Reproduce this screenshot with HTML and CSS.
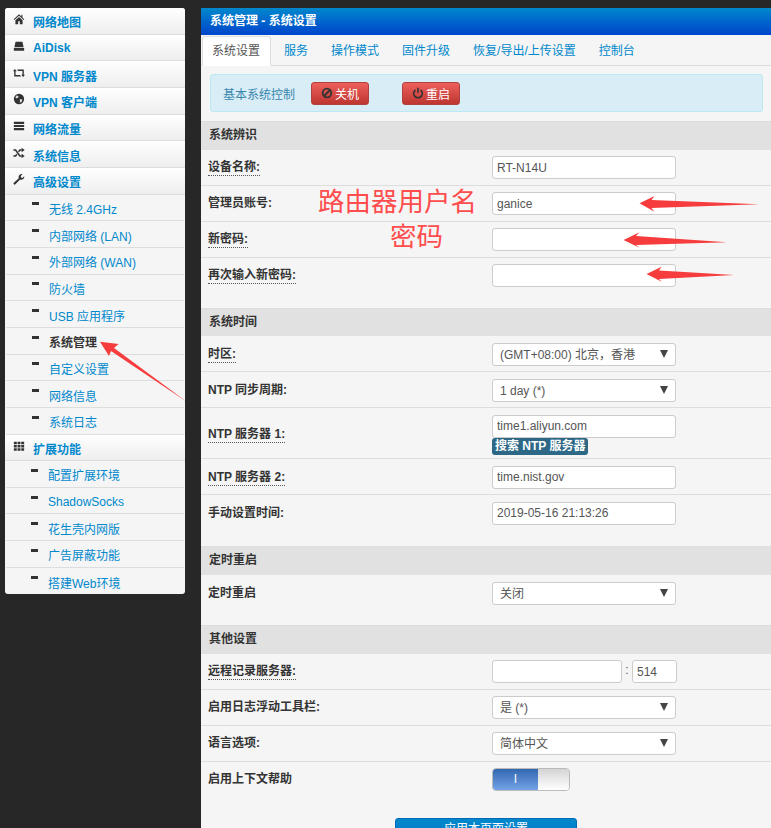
FILE: index.html
```html
<!DOCTYPE html>
<html lang="zh">
<head>
  <meta charset="UTF-8" />
  <title>系统管理 - 系统设置</title>
  <link rel="stylesheet" href="styles.css">
</head>
<body>
  <div class="page">
    <ul class="sideNav">
      <li class="navItem"><svg class="navIcon" viewBox="0 0 14 14"><path d="M7 1.500 0.800 7.400l.8.8L7 3.200l5.400 5 .8-.8-2.200-2.100V2H9.800v2.200zM2.800 8.600V13H6V9.600h2V13h3.200V8.600L7 4.700z"/></svg><a>网络地图</a></li>
      <li class="navItem"><svg class="navIcon" viewBox="0 0 14 14"><path d="M3 2h8l1.400 6.500H1.600zM1 9.400h12V12.600H1z"/></svg><a>AiDisk</a></li>
      <li class="navItem"><svg class="navIcon" viewBox="0 0 14 14"><path d="M0 5 2.200 2.400 4.400 5H3v4.400h5l1.500 1.700H1.400V5zM14 9l-2.200 2.600L9.600 9H11V4.600H6L4.500 2.900H12.600V9z"/></svg><a>VPN 服务器</a></li>
      <li class="navItem"><svg class="navIcon" viewBox="0 0 14 14"><circle cx="7" cy="7" r="6"/><path fill="#ddd" d="M4 2.800 6.500 3.500 6 5.500 4 6.500 2.800 5zM8 7l3 .5-1 3-2 1z"/></svg><a>VPN 客户端</a></li>
      <li class="navItem"><svg class="navIcon" viewBox="0 0 14 14"><path d="M1 2h12v2.600H1zM1 5.700h12v2.600H1zM1 9.400h12V12H1z"/></svg><a>网络流量</a></li>
      <li class="navItem"><svg class="navIcon" viewBox="0 0 14 14"><path fill="none" stroke="#333" stroke-width="1.800" d="M.5 3.500h2.500l5 7h2M.5 10.500h2.500l1.500-2M6.500 5.500l1.500-2h2"/><path d="M10 1l3.600 2.500L10 6zM10 8l3.600 2.500L10 13z"/></svg><a>系统信息</a></li>
      <li class="navItem"><svg class="navIcon" viewBox="0 0 14 14"><path d="M1 11.500 6.800 6A3.400 3.400 0 0 1 11 1.500L9 3.600l.4 1.700 1.700.4L13 3.700A3.400 3.400 0 0 1 8.300 7.600L2.800 13.200a1.200 1.200 0 0 1-1.800-1.700z"/></svg><a>高级设置</a></li>
      <li>
        <ul class="subNav">
          <li class="subItem"><a>无线 2.4GHz</a></li>
          <li class="subItem"><a>内部网络 (LAN)</a></li>
          <li class="subItem"><a>外部网络 (WAN)</a></li>
          <li class="subItem"><a>防火墙</a></li>
          <li class="subItem"><a>USB 应用程序</a></li>
          <li class="subItem current"><a>系统管理</a></li>
          <li class="subItem"><a>自定义设置</a></li>
          <li class="subItem"><a>网络信息</a></li>
          <li class="subItem"><a>系统日志</a></li>
        </ul>
      </li>
      <li class="navItem"><svg class="navIcon" viewBox="0 0 14 14"><path d="M1 2h3.400v3H1zM5.300 2h3.400v3H5.300zM9.600 2H13v3H9.600zM1 5.800h3.400v3H1zM5.300 5.800h3.400v3H5.300zM9.600 5.800H13v3H9.600zM1 9.600h3.400v3H1zM5.300 9.600h3.400v3H5.300zM9.600 9.600H13v3H9.600z"/></svg><a>扩展功能</a></li>
      <li>
        <ul class="subNav extNav">
          <li class="subItem"><a>配置扩展环境</a></li>
          <li class="subItem"><a>ShadowSocks</a></li>
          <li class="subItem"><a>花生壳内网版</a></li>
          <li class="subItem"><a>广告屏蔽功能</a></li>
          <li class="subItem"><a>搭建Web环境</a></li>
        </ul>
      </li>
    </ul>

    <div class="main">
      <div class="mainTitle">系统管理 - 系统设置</div>
      <div class="tabs">
        <a class="tab active">系统设置</a>
        <a class="tab">服务</a>
        <a class="tab">操作模式</a>
        <a class="tab">固件升级</a>
        <a class="tab">恢复/导出/上传设置</a>
        <a class="tab">控制台</a>
      </div>

      <div class="infoBox">
        <span class="infoText">基本系统控制</span>
        <button class="dangerBtn"><svg class="btnIcon" viewBox="0 0 12 12"><circle cx="6" cy="6" r="4.300" fill="none" stroke="#333" stroke-width="1.800"/><path d="M3 9 9 3" stroke="#333" stroke-width="1.800"/></svg>关机</button>
        <button class="dangerBtn"><svg class="btnIcon" viewBox="0 0 12 12"><path d="M3.500 3a4.300 4.300 0 1 0 5 0" fill="none" stroke="#333" stroke-width="1.600"/><path d="M6 .8v5" stroke="#333" stroke-width="1.600"/></svg>重启</button>
      </div>

      <div class="sectionHead">系统辨识</div>
      <div class="row"><label class="help">设备名称:</label><input class="field" type="text" value="RT-N14U"></div>
      <div class="row"><label>管理员账号:</label><input class="field" type="text" value="ganice"></div>
      <div class="row"><label class="help">新密码:</label><input class="field" type="text"></div>
      <div class="row last"><label class="help">再次输入新密码:</label><input class="field" type="text"></div>

      <div class="sectionHead">系统时间</div>
      <div class="row"><label class="help">时区:</label><div class="selectBox">(GMT+08:00) 北京，香港</div></div>
      <div class="row"><label>NTP 同步周期:</label><div class="selectBox">1 day (*)</div></div>
      <div class="row tall">
        <label class="help">NTP 服务器 1:</label>
        <div class="stack">
          <input class="field" type="text" value="time1.aliyun.com">
          <span class="tag">搜索 NTP 服务器</span>
        </div>
      </div>
      <div class="row"><label class="help">NTP 服务器 2:</label><input class="field" type="text" value="time.nist.gov"></div>
      <div class="row last longLast"><label>手动设置时间:</label><input class="field" type="text" value="2019-05-16 21:13:26"></div>

      <div class="sectionHead">定时重启</div>
      <div class="row last"><label>定时重启</label><div class="selectBox">关闭</div></div>

      <div class="sectionHead">其他设置</div>
      <div class="row">
        <label class="help">远程记录服务器:</label>
        <div class="hostGroup">
          <input class="field hostField" type="text">
          <span class="colon">:</span>
          <input class="field portField" type="text" value="514">
        </div>
      </div>
      <div class="row"><label>启用日志浮动工具栏:</label><div class="selectBox">是 (*)</div></div>
      <div class="row"><label>语言选项:</label><div class="selectBox">简体中文</div></div>
      <div class="row last">
        <label>启用上下文帮助</label>
        <div class="switch"><span class="switchOn">I</span><span class="switchOff"></span></div>
      </div>

      <div class="applyRow"><button class="applyBtn">应用本页面设置</button></div>
    </div>
  </div>

  <div class="note noteUser">路由器用户名</div>
  <div class="note notePass">密码</div>
  <svg class="arrows" width="771" height="828" viewBox="0 0 771 828">
    <path d="M100 341.700 118.500 344 114 348 187 402 111 351 109 356z"/>
    <path d="M639.500 203.300 654.500 196 651.500 200 759 204.300 651.500 208 654.500 211.700z"/>
    <path d="M623.500 240 639.500 232.300 636 236 727 242.300 636 245 639.500 247.700z"/>
    <path d="M646.500 274 661.700 266.700 659 270.500 734 275 659 279 661.700 281.700z"/>
  </svg>
</body>
</html>
```

FILE: styles.css
```css
* {
  box-sizing: border-box;
}

body {
  margin: 0;
  height: 828px;
  overflow: hidden;
  background-color: #272727;
  font-family: "Liberation Sans", "Noto Sans CJK SC", sans-serif;
  font-size: 12px;
  color: #333;
}

ul {
  list-style: none;
  margin: 0;
  padding: 0;
}

.page {
  display: flex;
  align-items: flex-start;
  padding: 8px 0 0 5px;
}

/* left menu */
.sideNav {
  width: 180px;
  flex-shrink: 0;
  background-color: #f5f5f5;
  border-radius: 3px;
}

.navItem {
  display: flex;
  align-items: center;
  height: 26.67px;
  padding-left: 8px;
  background: linear-gradient(#fff, #eee);
  border-bottom: 1px solid #ddd;
}

.navItem:first-child {
  border-radius: 3px 3px 0 0;
}

.navItem a {
  margin-top: 2px;
  color: #0088cc;
  font-weight: 700;
}

.navIcon {
  width: 12px;
  height: 12px;
  margin-right: 8px;
  margin-top: -3px;
  fill: #333;
}

.subNav {
  padding: 0 1px;
}

.subItem {
  display: flex;
  align-items: center;
  height: 26.67px;
  padding-left: 26px;
  border-bottom: 1px solid #ddd;
}

.subItem::before {
  content: "";
  width: 7px;
  height: 3px;
  margin-top: -7px;
  margin-right: 10px;
  background-color: #333;
}

.subItem a {
  margin-top: 2px;
  color: #0088cc;
}

.subItem.current a {
  color: #333;
  font-weight: 700;
}

.extNav .subItem {
  padding-left: 25px;
}

.extNav .subItem:last-child {
  border-bottom: none;
}

/* main panel */
.main {
  width: 570px;
  margin-left: 16px;
  background-color: #f5f5f5;
}

.mainTitle {
  height: 27px;
  line-height: 26px;
  padding-left: 9px;
  color: #fff;
  font-weight: 700;
  background: linear-gradient(#0088cc, #0044cc);
}

.tabs {
  display: flex;
  height: 31px;
  padding: 1px 0 0 1px;
  border-bottom: 1px solid #ddd;
}

.tab {
  height: 30px;
  line-height: 28px;
  padding: 0 10px 0 9px;
  margin-right: 2px;
  border: 1px solid transparent;
  border-radius: 3px 3px 0 0;
  color: #0088cc;
}

.tab.active {
  margin-right: 3px;
  background-color: #fff;
  color: #555;
  border-color: #ddd #ddd transparent;
}

.infoBox {
  display: flex;
  align-items: center;
  height: 38px;
  margin: 8px 8px 9px 9px;
  padding-left: 12px;
  background-color: #d9edf7;
  border: 1px solid #bce8f1;
  border-radius: 3px;
}

.infoText {
  color: #3a87ad;
  margin-right: 16px;
}

.dangerBtn {
  display: flex;
  align-items: center;
  justify-content: center;
  width: 58px;
  height: 23px;
  margin-right: 33px;
  padding: 0;
  color: #fff;
  font-family: inherit;
  font-size: 12px;
  background: linear-gradient(#ee5f5b, #bd362f);
  border: 1px solid #b0413e;
  border-radius: 3px;
}

.btnIcon {
  width: 12px;
  height: 12px;
  margin-right: 2px;
}

.sectionHead {
  height: 28.67px;
  line-height: 27px;
  padding-left: 8px;
  font-weight: 700;
  background-color: #e1e1e1;
  border-top: 1px solid #ddd;
}

.row {
  display: grid;
  grid-template-columns: 284px 1fr;
  align-items: start;
  height: 36px;
  padding: 6.67px 0 0 7px;
  border-bottom: 1px solid #ddd;
}

.row.tall {
  height: 51px;
}

.row.tall label {
  margin-top: 12px;
}

.row.last {
  height: 50px;
  border-bottom: none;
}

.row.longLast {
  height: 51px;
}

.row label {
  justify-self: start;
  line-height: 15px;
  margin-top: 4px;
  font-weight: 700;
}

.row label.help {
  border-bottom: 1px dotted #555;
}

.field {
  display: block;
  width: 184px;
  height: 23px;
  padding: 0 4px;
  font-family: inherit;
  font-size: 12px;
  color: #555;
  background-color: #fff;
  border: 1px solid #ccc;
  border-radius: 3px;
}

.stack {
  display: flex;
  flex-direction: column;
  align-items: flex-start;
}

.tag {
  height: 17px;
  line-height: 17px;
  padding: 0 3px;
  color: #fff;
  font-weight: 700;
  background-color: #2d6987;
  border-radius: 3px;
}

.selectBox {
  position: relative;
  width: 184px;
  height: 23px;
  line-height: 23px;
  padding-left: 7px;
  color: #555;
  background-color: #fff;
  border: 1px solid #ccc;
  border-radius: 3px;
}

.selectBox::after {
  content: "";
  position: absolute;
  right: 7px;
  top: 6px;
  border-left: 4px solid transparent;
  border-right: 4px solid transparent;
  border-top: 8px solid #444;
}

.hostGroup {
  display: flex;
}

.hostField {
  width: 130px;
}

.colon {
  width: 10px;
  line-height: 21px;
  text-align: center;
  color: #555;
}

.portField {
  width: 45px;
}

.switch {
  display: flex;
  width: 78px;
  height: 23px;
  border: 1px solid #bbb;
  border-radius: 4px;
  overflow: hidden;
}

.switchOn {
  width: 45px;
  line-height: 21px;
  text-align: center;
  color: #fff;
  background: linear-gradient(#3268b0, #74a2e6);
}

.switchOff {
  flex: 1;
  background: linear-gradient(#d4d4d4, #fff);
}

.applyRow {
  display: flex;
  justify-content: center;
  padding-top: 6px;
}

.applyBtn {
  width: 182px;
  height: 30px;
  padding: 0 0 10px;
  color: #fff;
  font-family: inherit;
  font-size: 12px;
  background: linear-gradient(#0088cc, #0071c5);
  border: 1px solid #0068b5;
  border-radius: 3px;
}

/* red marks drawn on top of the screenshot */
.note {
  position: absolute;
  color: #ff4d4d;
  font-family: "Liberation Serif", "Noto Sans CJK SC", serif;
  font-size: 26.5px;
  line-height: 30px;
}

.noteUser {
  left: 318px;
  top: 187px;
}

.notePass {
  left: 390px;
  top: 222px;
}

.arrows {
  position: absolute;
  left: 0;
  top: 0;
  fill: #f63c3c;
  pointer-events: none;
}
```
